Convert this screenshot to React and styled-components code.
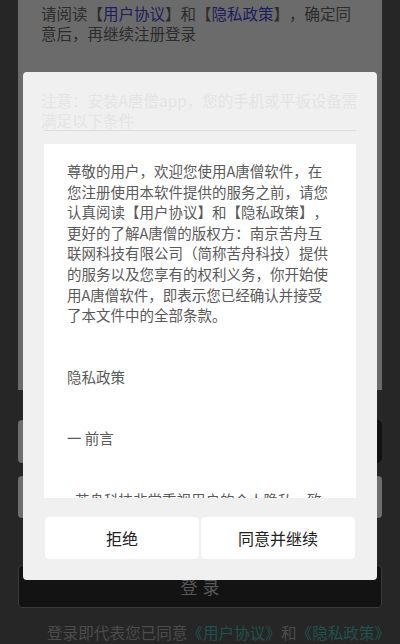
import React from "react";
import styled, { createGlobalStyle } from "styled-components";

const GlobalStyle = createGlobalStyle`
  html, body {
    margin: 0;
    padding: 0;
    background: #262626;
    height: 644px;
    overflow: hidden;
  }
  body {
    font-family: "Noto Sans CJK SC", "Noto Sans", sans-serif;
    text-spacing-trim: space-all;
  }
`;

const Page = styled.div`
  margin: 0 18px;
  height: 644px;
  display: flex;
  flex-direction: column;
`;

const NoticeSection = styled.div`
  background: #6b6b6b;
  height: 390px;
  padding: 3px 24px 0 23px;
  box-sizing: border-box;
`;

const NoticeText = styled.p`
  margin: 0;
  font-size: 15.5px;
  line-height: 20px;
  color: #2c2c2c;
`;

const NavyLink = styled.span`
  color: #1c1c5a;
`;

const FormSection = styled.div`
  display: flex;
  flex-direction: column;
  gap: 13px;
  padding-top: 30px;
`;

const FieldRow = styled.div`
  display: flex;
  height: ${(p) => p.$h}px;
  border-radius: 4px;
  overflow: hidden;
  background: #6e6e6e;
`;

const FieldInput = styled.div`
  flex: 1;
`;

const CodeButton = styled.div`
  width: 110px;
  background: #121212;
`;

const LoginButton = styled.div`
  margin-top: 47px;
  height: 43px;
  box-sizing: border-box;
  background: #131313;
  border: 1px solid #3a3a3a;
  border-radius: 4px;
  display: flex;
  align-items: center;
  justify-content: center;
  font-size: 17px;
  letter-spacing: 5px;
  padding-left: 5px;
  color: #585858;
`;

const Footer = styled.div`
  margin-top: 14px;
  margin-left: 29px;
  white-space: nowrap;
  font-size: 15.6px;
  line-height: 20px;
  color: #4c4c4c;
`;

const TealLink = styled.span`
  color: #1e524e;
`;

const Modal = styled.div`
  position: fixed;
  top: 72px;
  left: 23px;
  width: 354px;
  height: 508px;
  box-sizing: border-box;
  background: #f0f0f0;
  border-radius: 4px;
  padding-top: 18px;
  display: flex;
  flex-direction: column;
`;

const GhostNotice = styled.p`
  margin: 0;
  padding: 0 12px 0 18px;
  font-size: 15.5px;
  line-height: 20px;
  color: #e4e4e4;
`;

const Divider = styled.div`
  margin: 0 21px;
  height: 1px;
  background: #dddddd;
`;

const Agreement = styled.div`
  margin: 13px 21px 0;
  height: 354px;
  background: #ffffff;
  overflow: hidden;
  box-sizing: border-box;
  padding: 17px 0 0 23px;
`;

const AgreementText = styled.p`
  margin: 0 0 41px;
  width: 266px;
  font-size: 14.5px;
  line-height: 20.6px;
  color: #5a5a5a;
  text-indent: ${(p) => p.$indent || 0}px;
`;

const Actions = styled.div`
  margin: 19px 22px 0;
  display: flex;
  gap: 2px;
`;

const ActionButton = styled.button`
  flex: 1;
  height: 42px;
  border: none;
  border-radius: 4px;
  background: #ffffff;
  font-family: "Noto Sans CJK SC", "Noto Sans", sans-serif;
  font-size: 16px;
  color: #222222;
  padding: 0;
`;

export default function App() {
  return (
    <>
      <GlobalStyle />
      <Page>
        <NoticeSection>
          <NoticeText>
            请阅读【<NavyLink>用户协议</NavyLink>】和【<NavyLink>隐私政策</NavyLink>】，确定同意后，再继续注册登录
          </NoticeText>
        </NoticeSection>
        <FormSection>
          <FieldRow $h={43}>
            <FieldInput />
            <CodeButton />
          </FieldRow>
          <FieldRow $h={42}>
            <FieldInput />
          </FieldRow>
        </FormSection>
        <LoginButton>登录</LoginButton>
        <Footer>
          登录即代表您已同意<TealLink>《用户协议》</TealLink>和<TealLink>《隐私政策》</TealLink>
        </Footer>
      </Page>

      <Modal>
        <GhostNotice>注意：安装A唐僧app，您的手机或平板设备需满足以下条件</GhostNotice>
        <Divider />
        <Agreement>
          <AgreementText>
            尊敬的用户，欢迎您使用A唐僧软件，在您注册使用本软件提供的服务之前，请您认真阅读【用户协议】和【隐私政策】，更好的了解A唐僧的版权方：南京苦舟互联网科技有限公司（简称苦舟科技）提供的服务以及您享有的权利义务，你开始使用A唐僧软件，即表示您已经确认并接受了本文件中的全部条款。
          </AgreementText>
          <AgreementText>隐私政策</AgreementText>
          <AgreementText>一 前言</AgreementText>
          <AgreementText $indent={8}>
            苦舟科技非常重视用户的个人隐私，致力于保护您的个人信息安全。
          </AgreementText>
        </Agreement>
        <Actions>
          <ActionButton>拒绝</ActionButton>
          <ActionButton>同意并继续</ActionButton>
        </Actions>
      </Modal>
    </>
  );
}
